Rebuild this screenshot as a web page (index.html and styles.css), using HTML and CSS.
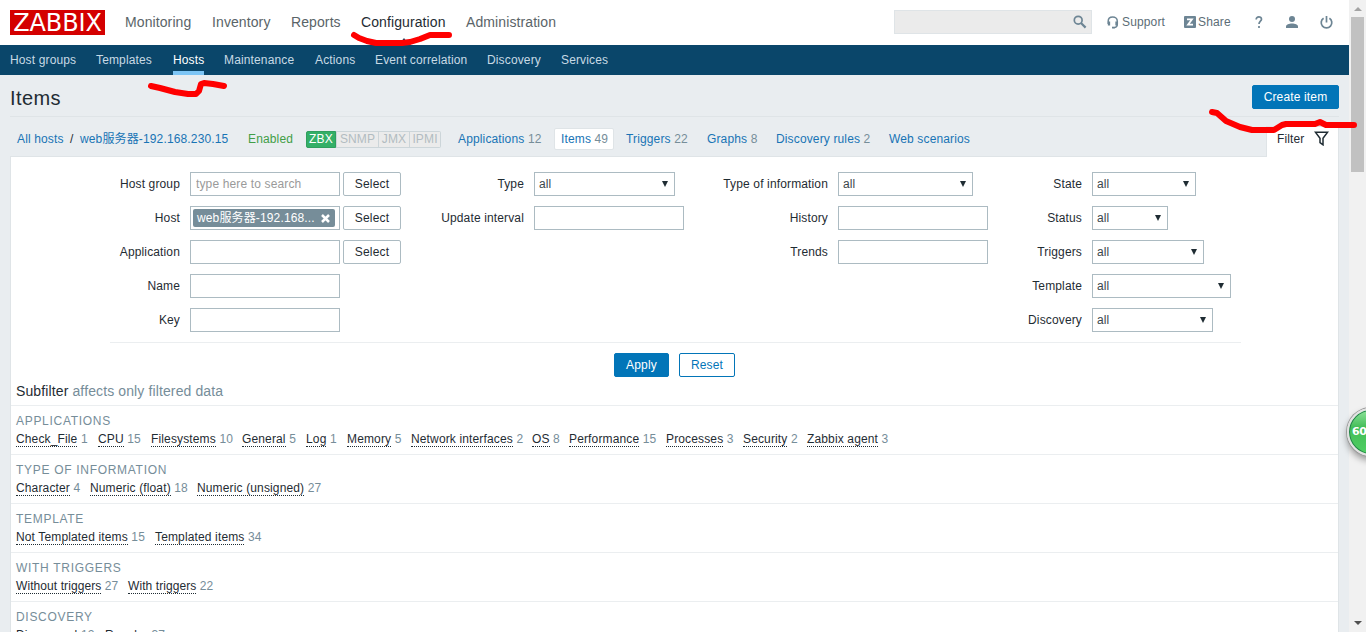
FILE: index.html
```html
<!DOCTYPE html>
<html lang="en">
<head>
    <meta charset="UTF-8">
    <title>Configuration of items</title>
    <link rel="stylesheet" href="styles.css">
</head>
<body>
    <div class="page">
        <header class="top-bar">
            <a class="logo">ZABBIX</a>
            <nav class="top-nav">
                <a>Monitoring</a>
                <a>Inventory</a>
                <a>Reports</a>
                <a class="selected">Configuration</a>
                <a>Administration</a>
            </nav>
            <div class="search">
                <svg width="14" height="14" viewBox="0 0 14 14"><circle cx="5.2" cy="5.2" r="3.9" fill="none" stroke="#6d8594" stroke-width="1.7"/><path d="M8 8l4.6 4.6" stroke="#6d8594" stroke-width="2.2"/></svg>
            </div>
            <div class="user-nav">
                <a class="support">
                    <svg width="12" height="13" viewBox="0 0 12 13" fill="none" stroke="#6d8594"><path d="M1.2 8V5.2C1.2 2.600 3.200 1 5.700 1s4.600 1.600 4.600 4.200V8c0 2.300-1.200 3.600-3.600 3.700" stroke-width="1.500"/><path d="M2 5.500v4M9.500 5.500v4" stroke-width="2.300"/><path d="M5 11.600h2.600" stroke-width="1.800"/></svg>
                    <span>Support</span>
                </a>
                <a class="share">
                    <svg width="12" height="12" viewBox="0 0 12 12"><rect width="12" height="12" rx="1" fill="#6d8594"/><path d="M3 3.300h5L4 8.700h5" fill="none" stroke="#fff" stroke-width="1.700"/></svg>
                    <span>Share</span>
                </a>
                <a class="help">
                    <svg width="8" height="12" viewBox="0 0 8 12" fill="none" stroke="#6d8594" stroke-width="1.700"><path d="M1.200 3.400C1.200 1.800 2.300.9 3.800.9s2.700.9 2.700 2.300c0 1.900-2.500 2.200-2.500 4.800M4 10v2"/></svg>
                </a>
                <a class="profile">
                    <svg width="12" height="12" viewBox="0 0 12 12" fill="#6d8594"><circle cx="6" cy="3" r="3"/><path d="M0 12v-1.500C0 8.400 3 7.400 6 7.400s6 1 6 3.100V12z"/></svg>
                </a>
                <a class="signout">
                    <svg width="13" height="13" viewBox="0 0 13 13" fill="none" stroke="#6d8594" stroke-width="1.700"><path d="M3.600 2.200a5.300 5.300 0 1 0 5.800 0M6.500 0v6.600"/></svg>
                </a>
            </div>
        </header>

        <nav class="sub-nav">
            <a>Host groups</a>
            <a>Templates</a>
            <a class="selected"><span>Hosts</span></a>
            <a>Maintenance</a>
            <a>Actions</a>
            <a>Event correlation</a>
            <a>Discovery</a>
            <a>Services</a>
        </nav>

        <main class="content">
            <div class="header-title">
                <h1>Items</h1>
                <button class="btn btn-create">Create item</button>
            </div>

            <div class="object-bar">
                <div class="object-group">
                    <a class="all-hosts">All hosts</a>
                    <span class="slash">/</span>
                    <a class="host-name">web服务器-192.168.230.15</a>
                    <span class="enabled">Enabled</span>
                    <div class="status-container">
                        <span class="status-green">ZBX</span>
                        <span>SNMP</span>
                        <span>JMX</span>
                        <span>IPMI</span>
                    </div>
                    <div class="object-links">
                        <div><a>Applications</a> <sup>12</sup></div>
                        <div><span class="current"><a>Items</a> <sup>49</sup></span></div>
                        <div><a>Triggers</a> <sup>22</sup></div>
                        <div><a>Graphs</a> <sup>8</sup></div>
                        <div><a>Discovery rules</a> <sup>2</sup></div>
                        <div><a>Web scenarios</a></div>
                    </div>
                </div>
                <div class="filter-tab">
                    <span>Filter</span>
                    <svg width="15" height="15" viewBox="0 0 15 15" fill="none" stroke="#1f2c33" stroke-width="1.500"><path d="M1.400 1.200h12.200L9 7.200v6.600L6 11.600V7.200z"/></svg>
                </div>
            </div>

            <div class="panel">
                <form class="filter">
                    <div class="filter-column">
                        <div class="row"><label>Host group</label><input type="text" placeholder="type here to search"><button type="button" class="btn-grey">Select</button></div>
                        <div class="row"><label>Host</label><div class="multiselect"><span class="chip"><span>web服务器-192.168...</span><svg width="9" height="9" viewBox="0 0 9 9" stroke="#fff" stroke-width="2.500"><path d="M1 1l7 7M8 1L1 8"/></svg></span></div><button type="button" class="btn-grey">Select</button></div>
                        <div class="row"><label>Application</label><input type="text"><button type="button" class="btn-grey">Select</button></div>
                        <div class="row"><label>Name</label><input type="text"></div>
                        <div class="row"><label>Key</label><input type="text"></div>
                    </div>
                    <div class="filter-column">
                        <div class="row"><label>Type</label><div class="select w-type">all</div></div>
                        <div class="row"><label>Update interval</label><input type="text"></div>
                    </div>
                    <div class="filter-column">
                        <div class="row"><label>Type of information</label><div class="select w-info">all</div></div>
                        <div class="row"><label>History</label><input type="text"></div>
                        <div class="row"><label>Trends</label><input type="text"></div>
                    </div>
                    <div class="filter-column">
                        <div class="row"><label>State</label><div class="select w-state">all</div></div>
                        <div class="row"><label>Status</label><div class="select w-status">all</div></div>
                        <div class="row"><label>Triggers</label><div class="select w-triggers">all</div></div>
                        <div class="row"><label>Template</label><div class="select w-template">all</div></div>
                        <div class="row"><label>Discovery</label><div class="select w-discovery">all</div></div>
                    </div>
                </form>
                <div class="filter-buttons">
                    <button class="btn btn-apply">Apply</button>
                    <button class="btn btn-alt">Reset</button>
                </div>

                <div class="subfilter-title"><b>Subfilter</b> affects only filtered data</div>
                <section class="subfilter">
                    <h3>Applications</h3>
                    <div class="options applications">
                        <span><a>Check_File</a> <sup>1</sup></span>
                        <span><a>CPU</a> <sup>15</sup></span>
                        <span><a>Filesystems</a> <sup>10</sup></span>
                        <span><a>General</a> <sup>5</sup></span>
                        <span><a>Log</a> <sup>1</sup></span>
                        <span><a>Memory</a> <sup>5</sup></span>
                        <span><a>Network interfaces</a> <sup>2</sup></span>
                        <span><a>OS</a> <sup>8</sup></span>
                        <span><a>Performance</a> <sup>15</sup></span>
                        <span><a>Processes</a> <sup>3</sup></span>
                        <span><a>Security</a> <sup>2</sup></span>
                        <span><a>Zabbix agent</a> <sup>3</sup></span>
                    </div>
                </section>
                <section class="subfilter">
                    <h3>Type of information</h3>
                    <div class="options types">
                        <span><a>Character</a> <sup>4</sup></span>
                        <span><a>Numeric (float)</a> <sup>18</sup></span>
                        <span><a>Numeric (unsigned)</a> <sup>27</sup></span>
                    </div>
                </section>
                <section class="subfilter">
                    <h3>Template</h3>
                    <div class="options templates">
                        <span><a>Not Templated items</a> <sup>15</sup></span>
                        <span><a>Templated items</a> <sup>34</sup></span>
                    </div>
                </section>
                <section class="subfilter">
                    <h3>With triggers</h3>
                    <div class="options triggers">
                        <span><a>Without triggers</a> <sup>27</sup></span>
                        <span><a>With triggers</a> <sup>22</sup></span>
                    </div>
                </section>
                <section class="subfilter">
                    <h3>Discovery</h3>
                    <div class="options discovery">
                        <span><a>Discovered</a> <sup>12</sup></span>
                        <span><a>Regular</a> <sup>37</sup></span>
                    </div>
                </section>
            </div>
        </main>
    </div>

    <div class="scrollbar">
        <i class="arrow-up"></i>
        <div class="thumb"></div>
        <i class="arrow-down"></i>
    </div>

    <!-- hand-drawn marks -->
    <svg class="marks" width="1366" height="140" viewBox="0 0 1366 140">
        <path d="M354 35L359 38L367 41L376 43L402 43L410 42L420 39L430 35L449 35"/>
        <path d="M151 86L160 88L175 92L188 94L196 94L199 91L201 84L204 83L213 84L224 86"/>
        <path d="M1212 112L1217 113L1226 121L1240 127L1252 130L1274 130L1282 125L1286 124L1315 124L1320 122L1326 125L1354 125"/>
    </svg>
    <div class="ball">60</div>
</body>
</html>
```

FILE: styles.css
```css
* {
    box-sizing: border-box;
}
body {
    margin: 0;
    width: 1366px;
    height: 632px;
    overflow: hidden;
    display: flex;
    position: relative;
    background-color: #e9edf0;
    color: #1f2c33;
    font-family: "Liberation Sans", Arial, "Noto Sans CJK SC", sans-serif;
    font-size: 12px;
    line-height: 14px;
    letter-spacing: 0.14px;
}
.page {
    width: 1349px;
    height: 632px;
    overflow: hidden;
}
.top-bar {
    height: 45px;
    padding: 0 0 0 10px;
    display: flex;
    align-items: center;
    background-color: #fff;
}
.logo {
    width: 95px;
    height: 25px;
    margin-right: 20px;
    background-color: #d40000;
    color: #fff;
    font: 24px/26px "DejaVu Sans", sans-serif;
    letter-spacing: -0.1px;
    text-align: center;
}
.top-nav {
    display: grid;
    grid-template-columns: 87px 79px 70px 105px 100px;
    margin-bottom: 2px;
    font-size: 14px;
    line-height: 16px;
    color: #5a6468;
    letter-spacing: 0.1px;
    white-space: nowrap;
}
.top-nav .selected {
    position: relative;
    color: #1f2c33;
}
.top-nav .selected::after {
    content: "";
    position: absolute;
    left: 37px;
    top: 24px;
    border: 6px solid transparent;
    border-top: 0;
    border-bottom: 8px solid #0a466a;
}
.search {
    width: 198px;
    height: 24px;
    margin: 0 0 1px 328px;
    padding-right: 4px;
    display: flex;
    align-items: center;
    justify-content: flex-end;
    background-color: #ebebeb;
    border: 1px solid #dfe4e7;
}
.user-nav {
    display: grid;
    grid-template-columns: 77px 71px 31px 34px 13px;
    align-items: center;
    margin: 0 0 1px 15px;
    color: #5c6d76;
}
.user-nav a {
    display: flex;
    align-items: center;
    gap: 3px;
}
.user-nav .share {
    gap: 2px;
}
.sub-nav {
    display: grid;
    grid-template-columns: 86px 77px 51px 91px 60px 112px 74px 80px;
    height: 30px;
    padding-left: 10px;
    background-color: #0a466a;
    color: #c8dae5;
    line-height: 30px;
    white-space: nowrap;
}
.sub-nav .selected {
    color: #fff;
}
.sub-nav .selected span {
    display: block;
    width: 31px;
    height: 30px;
    border-bottom: 4px solid #7dc5f5;
}
.content {
    padding: 0 10px;
}
.header-title {
    height: 42px;
    display: flex;
    justify-content: space-between;
    align-items: center;
    padding-top: 3px;
    border-bottom: 1px solid #dfe4e7;
}
h1 {
    margin: 2px 0 0;
    font-size: 20px;
    line-height: 24px;
    font-weight: normal;
    letter-spacing: 0.4px;
}
button {
    font-family: inherit;
    font-size: 12px;
    letter-spacing: 0.15px;
    height: 24px;
    padding: 0;
    border-radius: 2px;
}
.btn {
    background-color: #0275b8;
    border: 1px solid #0275b8;
    color: #fff;
}
.btn-create {
    width: 87px;
}
.btn-apply {
    width: 55px;
}
.btn-alt {
    width: 56px;
    background-color: #fff;
    color: #0275b8;
}
.object-bar {
    height: 40px;
    display: flex;
    position: relative;
}
.object-group {
    flex: 1;
    display: flex;
    align-items: center;
    padding: 5px 0 0 7px;
    border-bottom: 1px solid #dfe4e7;
    white-space: nowrap;
}
.object-group a {
    color: #1874b5;
}
.all-hosts {
    width: 53px;
}
.slash {
    width: 10px;
}
.host-name {
    width: 168px;
}
.enabled {
    width: 58px;
    color: #429e47;
}
.status-container {
    display: grid;
    grid-template-columns: 30px 42px 31px 31px;
    height: 17px;
    width: 135px;
    margin-right: 17px;
    text-align: center;
    color: #b2bcc1;
    border: 1px solid #ccd5d9;
    border-left: 0;
    border-radius: 2px;
    line-height: 15px;
}
.status-container span {
    border-left: 1px solid #ccd5d9;
    background-color: #ebebeb;
}
.status-container .status-green {
    margin: -1px 0;
    border: 1px solid #2f9f5e;
    border-radius: 2px 0 0 2px;
    background-color: #34af67;
    color: #fff;
}
.object-links {
    display: grid;
    grid-template-columns: 103px 65px 81px 69px 113px 90px;
    align-items: center;
}
sup {
    font-size: inherit;
    line-height: inherit;
    vertical-align: baseline;
    color: #768d99;
}
.object-links .current {
    display: block;
    width: 60px;
    height: 22px;
    margin-left: -7px;
    padding: 3px 0 0 6px;
    background-color: #fff;
    border: 1px solid #dfe4e7;
    border-radius: 2px;
}
.filter-tab {
    width: 73px;
    height: 31px;
    margin-top: 9px;
    padding: 0 9px 7px 10px;
    display: flex;
    align-items: center;
    justify-content: space-between;
    background-color: #fff;
    border: 1px solid #dfe4e7;
    border-bottom: 0;
}
.panel {
    background-color: #fff;
    border: 1px solid #dfe4e7;
    border-top: 0;
}
.filter {
    display: grid;
    grid-template-columns: 320px 280px 300px 231px;
    width: 1131px;
    height: 186px;
    margin: 0 auto 0 99px;
    padding-top: 15px;
    border-bottom: 1px solid #ebeef0;
}
.filter-column {
    display: flex;
    flex-direction: column;
    gap: 10px;
}
.row {
    display: flex;
    align-items: center;
    height: 24px;
    white-space: nowrap;
}
.row label {
    width: 70px;
    margin-right: 10px;
    text-align: right;
}
.filter-column:nth-child(2) label {
    width: 94px;
}
.filter-column:nth-child(3) label {
    width: 118px;
}
.filter-column:nth-child(4) label {
    width: 72px;
}
.row input, .multiselect, .select {
    width: 150px;
    height: 24px;
    border: 1px solid #acbbc2;
    background-color: #fff;
    padding: 0 5px;
    font: inherit;
    letter-spacing: inherit;
}
.row input::placeholder {
    color: #9a9a9a;
}
.btn-grey {
    width: 58px;
    margin-left: 3px;
    background-color: #fff;
    border: 1px solid #acbbc2;
    color: #1f2c33;
}
.row .multiselect {
    padding: 2px;
}
.chip {
    display: flex;
    align-items: center;
    justify-content: space-between;
    width: 142px;
    height: 18px;
    padding: 0 5px 0 4px;
    border-radius: 2px;
    background-color: #768d99;
    color: #fff;
}
.row .select {
    position: relative;
    padding-left: 4px;
    line-height: 22px;
    color: #3b464c;
}
.select::after {
    content: "";
    position: absolute;
    right: 6px;
    top: 8px;
    border: 3px solid transparent;
    border-top: 6px solid #1f2c33;
    border-bottom: 0;
}
.row .w-type {
    width: 141px;
}
.row .w-info {
    width: 135px;
}
.row .w-state {
    width: 104px;
}
.row .w-status {
    width: 76px;
}
.row .w-triggers {
    width: 112px;
}
.row .w-template {
    width: 139px;
}
.row .w-discovery {
    width: 121px;
}
.filter-buttons {
    display: flex;
    gap: 10px;
    padding: 10px 0 0 603px;
}
.subfilter-title {
    height: 28px;
    padding: 6px 5px 0;
    font-size: 14px;
    line-height: 16px;
    letter-spacing: 0.12px;
    color: #768d99;
}
.subfilter-title b {
    font-weight: normal;
    color: #1f2c33;
}
.subfilter {
    height: 49px;
    padding: 8px 5px 0;
    border-top: 1px solid #ebeef0;
}
.subfilter h3 {
    margin: 0 0 4px;
    font-size: 12px;
    line-height: 14px;
    font-weight: normal;
    letter-spacing: 0.7px;
    text-transform: uppercase;
    color: #768d99;
}
.options {
    display: grid;
    line-height: 15px;
    white-space: nowrap;
}
.options a {
    display: inline-block;
    height: 15px;
    border-bottom: 1px dotted #1f2c33;
}
.applications {
    grid-template-columns: 82px 53px 91px 64px 41px 64px 121px 37px 97px 77px 64px 90px;
}
.types {
    grid-template-columns: 74px 107px 130px;
}
.templates {
    grid-template-columns: 139px 110px;
}
.triggers {
    grid-template-columns: 112px 90px;
    letter-spacing: 0.08px;
}
.discovery {
    grid-template-columns: 89px 80px;
}
.scrollbar {
    width: 17px;
    height: 632px;
    padding: 7px 2px;
    display: flex;
    flex-direction: column;
    align-items: center;
    background-color: #f1f1f1;
}
.arrow-up {
    border: 4px solid transparent;
    border-top: 0;
    border-bottom: 4px solid #a3a3a3;
}
.thumb {
    width: 13px;
    height: 155px;
    margin-top: 6px;
    background-color: #c1c1c1;
}
.arrow-down {
    margin-top: auto;
    border: 4px solid transparent;
    border-bottom: 0;
    border-top: 4px solid #505050;
}
.marks {
    position: absolute;
    left: 0;
    top: 0;
    fill: none;
    stroke: #f00;
    stroke-width: 6;
    stroke-linecap: round;
    stroke-linejoin: round;
}
.ball {
    position: absolute;
    left: 1347px;
    top: 408px;
    width: 48px;
    height: 48px;
    padding-left: 3px;
    border: 2px solid #e2e2e2;
    border-radius: 50%;
    box-shadow: inset 0 0 0 1px #23804a, 0 0 0 1px #999, 0 4px 7px rgba(0, 0, 0, 0.4);
    background: linear-gradient(#8fe39b, #43bd57 40%, #50cf63);
    color: #fff;
    font: bold 11px/44px "DejaVu Sans", sans-serif;
    letter-spacing: -0.5px;
}
```
